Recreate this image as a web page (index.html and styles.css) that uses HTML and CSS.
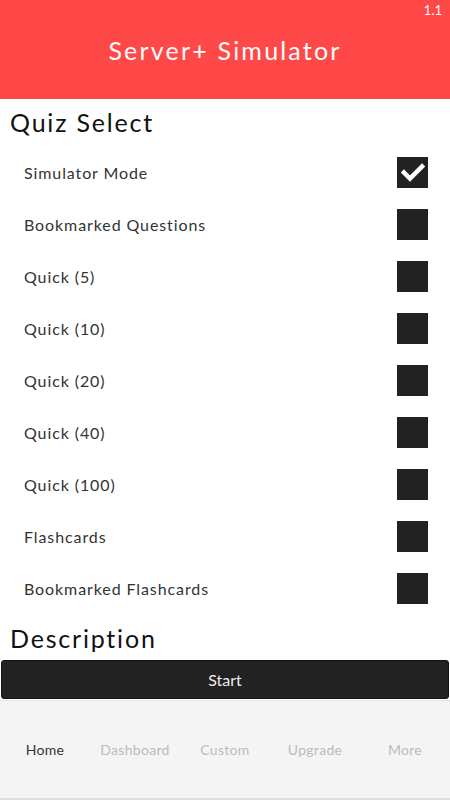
FILE: index.html
```html
<!DOCTYPE html>
<html lang="en">
<head>
  <meta charset="UTF-8" />
  <title>Server+ Simulator</title>
  <link rel="stylesheet" href="styles.css">
</head>
<body>

  <div class="app">
    <div class="header">
      <span class="version">1.1</span>
      <h1>Server+ Simulator</h1>
    </div>

    <div class="content">
      <h2>Quiz Select</h2>
      <ul class="options">
        <li><span>Simulator Mode</span><span class="box checked"><svg viewBox="0 0 24 24" width="24" height="24"><path d="M3 12.5l6 6L21 6.5" fill="none" stroke="#fff" stroke-width="4.5" stroke-linecap="square"/></svg></span></li>
        <li><span>Bookmarked Questions</span><span class="box"></span></li>
        <li><span>Quick (5)</span><span class="box"></span></li>
        <li><span>Quick (10)</span><span class="box"></span></li>
        <li><span>Quick (20)</span><span class="box"></span></li>
        <li><span>Quick (40)</span><span class="box"></span></li>
        <li><span>Quick (100)</span><span class="box"></span></li>
        <li><span>Flashcards</span><span class="box"></span></li>
        <li><span>Bookmarked Flashcards</span><span class="box"></span></li>
      </ul>
      <h2 class="desc">Description</h2>
    </div>

    <button class="start">Start</button>

    <div class="tabs">
      <span class="active">Home</span>
      <span>Dashboard</span>
      <span>Custom</span>
      <span>Upgrade</span>
      <span>More</span>
    </div>
  </div>

</body>
</html>
```

FILE: styles.css
```css
* {
  box-sizing: border-box;
}

body {
  margin: 0;
  font-family: Lato, "Liberation Sans", sans-serif;
  color: #222;
  background: #fff;
}

.app {
  width: 450px;
  height: 800px;
  display: flex;
  flex-direction: column;
  overflow: hidden;
}

.header {
  flex-shrink: 0;
  height: 99px;
  background-color: #ff4848;
  color: #fff;
  display: flex;
  align-items: center;
  justify-content: center;
  position: relative;
}

.header h1 {
  margin: 0;
  font-size: 25px;
  font-weight: normal;
  letter-spacing: 2.2px;
}

.version {
  position: absolute;
  top: 2px;
  right: 8px;
  font-size: 13px;
}

.content {
  flex: 1;
  min-height: 0;
}

h2 {
  margin: 0 0 9px;
  padding: 8px 0 0 10px;
  font-size: 25px;
  font-weight: normal;
  letter-spacing: 1.8px;
  color: #111;
}

.options {
  list-style: none;
  margin: 0;
  padding: 0;
}

.options li {
  height: 52px;
  display: flex;
  align-items: center;
  justify-content: space-between;
  padding: 0 22px 0 24px;
  font-size: 16px;
  letter-spacing: 0.9px;
  color: #333;
}

.box {
  width: 31px;
  height: 31px;
  background-color: #222;
  display: flex;
  align-items: center;
  justify-content: center;
}

.desc {
  margin-bottom: 0;
  padding-top: 9px;
}

.start {
  flex-shrink: 0;
  margin: 0 1px;
  height: 39px;
  background-color: #222;
  border: 1px solid #111;
  border-radius: 3px;
  color: #eee;
  font-family: inherit;
  font-size: 16px;
}

.tabs {
  flex-shrink: 0;
  height: 100px;
  margin-top: 1px;
  background-color: #f4f4f4;
  border-top: 1px solid #e6e6e6;
  border-bottom: 2px solid #ddd;
  display: grid;
  grid-template-columns: repeat(5, 1fr);
  align-items: center;
  text-align: center;
  font-size: 14px;
  letter-spacing: 0.3px;
  color: #bbb;
}

.tabs .active {
  color: #333;
}
```
